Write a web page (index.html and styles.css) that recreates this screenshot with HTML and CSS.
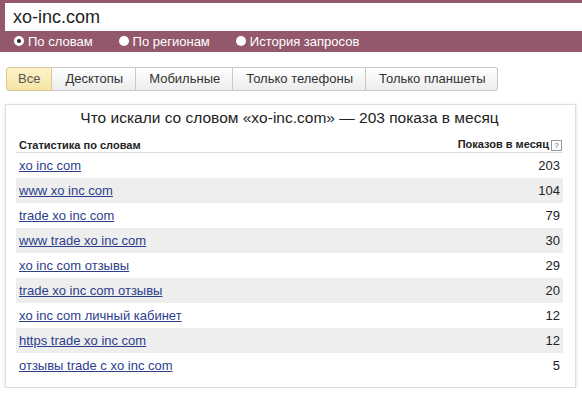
FILE: index.html
```html
<!DOCTYPE html>
<html lang="ru">
<head>
    <meta charset="UTF-8">
    <title>Подбор слов</title>
    <link rel="stylesheet" href="styles.css">
</head>
<body>
    <header class="search-bar">
        <div class="search-input">xo-inc.com</div>
        <div class="modes">
            <span class="mode"><span class="radio checked"></span>По словам</span>
            <span class="mode"><span class="radio"></span>По регионам</span>
            <span class="mode"><span class="radio"></span>История запросов</span>
        </div>
    </header>

    <nav class="tabs">
        <span class="tab active">Все</span>
        <span class="tab">Десктопы</span>
        <span class="tab">Мобильные</span>
        <span class="tab">Только телефоны</span>
        <span class="tab">Только планшеты</span>
    </nav>

    <section class="panel">
        <h2 class="panel-title">Что искали со словом «xo-inc.com» — 203 показа в месяц</h2>
        <table class="stats">
            <thead>
                <tr>
                    <th>Статистика по словам</th>
                    <th class="num">Показов в месяц<span class="hint">?</span></th>
                </tr>
            </thead>
            <tbody>
                <tr><td><a href="#">xo inc com</a></td><td class="num">203</td></tr>
                <tr><td><a href="#">www xo inc com</a></td><td class="num">104</td></tr>
                <tr><td><a href="#">trade xo inc com</a></td><td class="num">79</td></tr>
                <tr><td><a href="#">www trade xo inc com</a></td><td class="num">30</td></tr>
                <tr><td><a href="#">xo inc com отзывы</a></td><td class="num">29</td></tr>
                <tr><td><a href="#">trade xo inc com отзывы</a></td><td class="num">20</td></tr>
                <tr><td><a href="#">xo inc com личный кабинет</a></td><td class="num">12</td></tr>
                <tr><td><a href="#">https trade xo inc com</a></td><td class="num">12</td></tr>
                <tr><td><a href="#">отзывы trade с xo inc com</a></td><td class="num">5</td></tr>
            </tbody>
        </table>
    </section>
</body>
</html>
```

FILE: styles.css
```css
body {
    margin: 0;
    font-family: "Liberation Sans", Arial, sans-serif;
    font-size: 13px;
    color: #333;
    background-color: #fff;
}

.search-bar {
    background-color: #93586c;
    padding: 3px 0 2px 5px;
}

.search-input {
    background-color: #fff;
    height: 28px;
    line-height: 28px;
    padding-left: 8px;
    font-size: 18px;
    color: #222;
}

.modes {
    display: flex;
    gap: 26px;
    padding: 1px 0 0 9px;
    height: 18px;
    align-items: center;
}

.mode {
    display: flex;
    align-items: center;
    gap: 4px;
    color: #fff;
    font-size: 13px;
}

.radio {
    width: 10px;
    height: 10px;
    border-radius: 50%;
    background-color: #fff;
    box-sizing: border-box;
}

.radio.checked {
    border: 3px solid #fff;
    background-color: #222;
}

.tabs {
    display: flex;
    margin: 15px 0 0 6px;
}

.tab {
    padding: 0 12px 0 13px;
    height: 22px;
    line-height: 22px;
    border: 1px solid #c8c8c8;
    border-left: none;
    background: linear-gradient(#fff, #ececec);
    color: #333;
}

.tab:first-child {
    border-left: 1px solid #c8c8c8;
    border-radius: 3px 0 0 3px;
}

.tab:last-child {
    border-radius: 0 3px 3px 0;
}

.tab.active {
    background: linear-gradient(#fdf3c8, #f6e4a4);
    border-color: #d8c894;
    color: #555;
    padding: 0 11px;
}

.panel {
    margin: 13px 6px 0 5px;
    border: 1px solid #dedede;
    box-shadow: 0 1px 3px rgba(0, 0, 0, 0.15);
    padding: 0 12px 9px 10px;
}

.panel-title {
    margin: 0;
    padding: 3px 0 8px;
    font-size: 15.5px;
    font-weight: normal;
    text-align: center;
    line-height: 20px;
    color: #222;
}

.stats {
    width: 100%;
    border-collapse: collapse;
}

.stats th {
    font-size: 11px;
    font-weight: bold;
    text-align: left;
    padding: 2px 3px 1px;
    border-bottom: 1px solid #ddd;
    color: #222;
}

.stats th.num {
    text-align: right;
    padding-right: 1px;
}

.hint {
    display: inline-block;
    width: 9px;
    height: 9px;
    line-height: 9px;
    border: 1px solid #999;
    font-size: 8px;
    font-weight: normal;
    text-align: center;
    color: #666;
    margin-left: 2px;
    vertical-align: 0;
}

.stats td {
    height: 25px;
    padding: 0 3px;
}

.stats tbody tr:nth-child(even) td {
    background-color: #eeeeee;
}

.stats td.num {
    text-align: right;
    color: #222;
}

.stats a {
    color: #2c3e8c;
    text-decoration: underline;
}
```
